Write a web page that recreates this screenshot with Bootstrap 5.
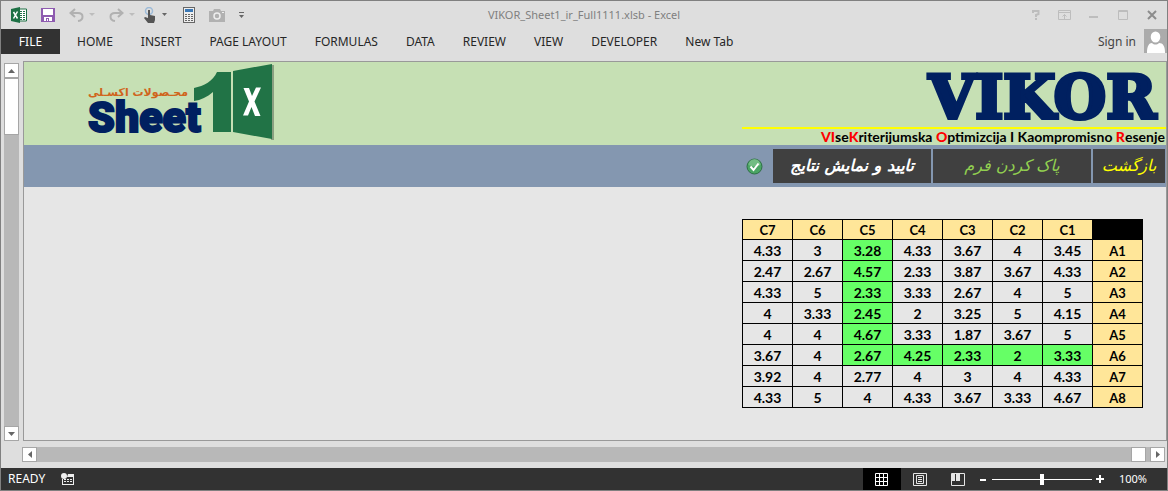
<!DOCTYPE html>
<html lang="en">
<head>
<meta charset="utf-8">
<meta name="viewport" content="width=device-width, initial-scale=1">
<title>VIKOR_Sheet1_ir_Full1111.xlsb - Excel</title>
<link href="https://cdn.jsdelivr.net/npm/bootstrap@5.3.0/dist/css/bootstrap.min.css" rel="stylesheet">
<style>
  body { font: 12px/16px "Noto Sans", "Open Sans", sans-serif; background: #dedede; color: #262626; }
  .app { border: 1px solid #808080; }
  .plain { border: 0; background: none; padding: 0; color: inherit; display: flex; align-items: center; justify-content: center; }
  svg { display: block; flex: none; }
  .titlebar { height: 28px; }
  .quick { padding-left: 10px; }
  .quick button { margin-left: 14px; }
  .quick .touch { margin-left: 8px; }
  .quick .calc { margin-left: 16px; }
  .doc-name { color: #808080; font-size: 11px; }
  .win { gap: 12px; padding-right: 7px; color: #bdbdbd; }
  .win button { width: 17px; height: 20px; }
  .ribbon { height: 25px; }
  .ribbon a { color: #262626; text-decoration: none; line-height: 25px; }
  .ribbon .file { background: #323232; color: #fff; width: 59px; text-align: center; }
  .tabs { padding-left: 17px; gap: 28px; }
  .signin { color: #444 !important; }
  .work { padding: 7px 0 0 3px; }
  .vscroll { width: 15px; margin: 2px 4px 0 0; background: #b8b8b8; }
  .knob { background: #fff; border: 1px solid #a6a6a6; }
  .vscroll .knob { width: 15px; height: 15px; }
  .vscroll .thumb { height: 57px; }
  .sheet { background: #e6e6e6; border: 1px solid #999; min-width: 0; }
  .banner { background: #c6e0b4; min-height: 83px; }
  .brand-mark { margin-left: 60px; }
  .method { width: 424px; }
  .method h1 { font: bold 60px/59px "DejaVu Serif", serif; color: #002060; -webkit-text-stroke: 4px #002060; border-bottom: 2px solid #ff0; padding: 6px 10px 0 0; }
  .method p { font: bold 14px/16px Lato, sans-serif; color: #000; padding-right: 1px; }
  .method b { color: #f00; }
  .actions { background: #8497b0; padding: 4px 1px 4px 0; gap: 2px; }
  .act { background: #404040; border: 0; height: 34px; padding: 0; font: italic bold 16px/30px "DejaVu Sans", sans-serif; width: 158px; color: #fff; }
  .act.clear-form { color: #92d050; font-weight: normal; }
  .act.back { color: #ff0; width: 72px; font-weight: normal; }
  .grid-area { padding: 32px 23px 20px 0; }
  .matrix { width: 401px; table-layout: fixed; border-collapse: collapse; color: #000; font: bold 14px/18px Lato, sans-serif; text-align: center; }
  .matrix th, .matrix td { border: 1px solid #000; padding: 2px 0 0; height: 21px; }
  .matrix th { background: #ffe699; font-size: 13px; }
  .matrix thead th, .matrix thead td { height: 20px; line-height: 17px; }
  .matrix .corner { background: #000; }
  .matrix .hit { background: #66ff66; }
  .hscroll { height: 15px; margin: 6px 2px 6px 21px; background: #b8b8b8; }
  .hscroll .knob { width: 15px; height: 15px; }
  .status { background: #323232; color: #fff; height: 22px; }
  .status .mode { margin: 0 16px 0 7px; }
  .status .percent { margin: 0 20px 0 15px; font-size: 11px; }
  .status .view { width: 38px; height: 22px; }
  .status .view.on { background: #000; }
  .zoom { appearance: none; width: 100px; height: 20px; margin: 0 4px 0 5px; background: linear-gradient(#fff, #fff) center / 100% 1px no-repeat; }
  .zoom::-webkit-slider-thumb { appearance: none; width: 4px; height: 11px; background: #fff; }
  .zoom::-moz-range-thumb { width: 4px; height: 11px; background: #fff; border: 0; border-radius: 0; }
</style>
</head>
<body>
<div class="app d-flex flex-column min-vh-100">
  <header>
    <div class="titlebar d-flex align-items-center position-relative">
      <div class="quick d-flex align-items-center">
        <svg width="16" height="16" viewBox="0 0 16 16" role="img" aria-label="Excel"><path d="M8 2h7.500v12H8z" fill="#fff" stroke="#1e7145"/><path d="M9 4h2v1H9zm3 0h2v1h-2zM9 6h2v1H9zm3 0h2v1h-2zM9 8h2v1H9zm3 0h2v1h-2zM9 10h2v1H9zm3 0h2v1h-2zM9 12h2v1H9zm3 0h2v1h-2z" fill="#1e7145"/><path d="M0 2l9-2v16l-9-2z" fill="#1e7145"/><path d="M2.500 5l4 6.500M6.500 4.500l-4 7" stroke="#fff" stroke-width="1.500"/></svg>
        <button class="plain" aria-label="Save"><svg width="14" height="14" viewBox="0 0 14 14"><path d="M0 0h14v14H0z" fill="#8e5bb0"/><path d="M2 1h10v6H2zM3 9h8v4H3z" fill="#fff"/><path d="M5 10h3v3H5z" fill="#8e5bb0"/><path d="M6 11h1v2H6z" fill="#fff"/></svg></button>
        <button class="plain" aria-label="Undo"><svg width="26" height="14" viewBox="0 0 26 14"><path d="M6 1L1.500 5 6 9M2 5h7c6 0 6 7 0 8" fill="none" stroke="#b1b1b1" stroke-width="2"/><path d="M20 5h6l-3 3z" fill="#bdbdbd"/></svg></button>
        <button class="plain" aria-label="Redo"><svg width="26" height="14" viewBox="0 0 26 14"><path d="M9 1l4.500 4L9 9M13 5H6C0 5 0 12 6 13" fill="none" stroke="#b1b1b1" stroke-width="2"/><path d="M20 5h6l-3 3z" fill="#bdbdbd"/></svg></button>
        <button class="plain touch" aria-label="Touch mode"><svg width="24" height="16" viewBox="0 0 24 16"><circle cx="6" cy="4" r="3.500" fill="none" stroke="#9dbbd8" stroke-width="1.500"/><path d="M5 3h2v5l5 1v4l-1 3H5L1 11l1-1 3 1z" fill="#555"/><path d="M19 6h5l-2.500 3z" fill="#666"/></svg></button>
        <button class="plain calc" aria-label="Calculator"><svg width="12" height="16" viewBox="0 0 12 16"><path d="M0 0h12v16H0z" fill="#666"/><path d="M1 1h10v14H1z" fill="#eee"/><path d="M2 2h8v3H2z" fill="#3b78b5"/><path d="M2 7h2v1H2zm3 0h2v1H5zm3 0h2v1H8zM2 9h2v1H2zm3 0h2v1H5zm3 0h2v1H8zM2 11h2v1H2zm3 0h2v1H5zm3 0h2v1H8zM2 13h2v1H2zm3 0h2v1H5zm3 0h2v1H8z" fill="#666"/></svg></button>
        <button class="plain" aria-label="Camera"><svg width="16" height="13" viewBox="0 0 16 13"><path d="M0 2h4l1-2h6l1 2h4v11H0z" fill="#b1b1b1"/><circle cx="8" cy="7" r="3" fill="none" stroke="#eee" stroke-width="1.500"/><path d="M13 3h2v1h-2z" fill="#eee"/></svg></button>
        <button class="plain" aria-label="Customize Quick Access Toolbar"><svg width="5" height="6" viewBox="0 0 5 6"><path d="M0 0h5v1H0zM0 3h5L2.500 6z" fill="#666"/></svg></button>
      </div>
      <div class="doc-name position-absolute start-50 translate-middle-x">VIKOR_Sheet1_ir_Full1111.xlsb - Excel</div>
      <div class="win d-flex ms-auto">
        <button class="plain" aria-label="Help"><svg width="8" height="10" viewBox="0 0 8 10"><path d="M1 3V1h5.500v3L4 5v2M3 9h2" fill="none" stroke="currentColor" stroke-width="2"/></svg></button>
        <button class="plain" aria-label="Ribbon options"><svg width="13" height="10" viewBox="0 0 13 10"><path d="M.5.5h12v9H.5zM.5 2.500h12M6.500 9V4.500M4.500 6.500l2-2 2 2" fill="none" stroke="currentColor"/></svg></button>
        <button class="plain" aria-label="Minimize"><svg width="9" height="10" viewBox="0 0 9 10"><path d="M0 6h9v2H0z" fill="currentColor"/></svg></button>
        <button class="plain" aria-label="Maximize"><svg width="10" height="10" viewBox="0 0 10 10"><path d="M.5.5h9v9H.5zM0 1.500h10" fill="none" stroke="currentColor"/></svg></button>
        <button class="plain" aria-label="Close"><svg width="10" height="10" viewBox="0 0 10 10"><path d="M1 1l8 8M9 1L1 9" stroke="#8c8c8c" stroke-width="2"/></svg></button>
      </div>
    </div>
    <nav class="ribbon d-flex" aria-label="Ribbon">
      <a class="file" href="#">FILE</a>
      <div class="tabs d-flex text-nowrap">
        <a href="#">HOME</a><a href="#">INSERT</a><a href="#">PAGE LAYOUT</a><a href="#">FORMULAS</a><a href="#">DATA</a><a href="#">REVIEW</a><a href="#">VIEW</a><a href="#">DEVELOPER</a><a href="#">New Tab</a>
      </div>
      <a class="signin d-flex ms-auto text-nowrap" href="#"><span class="me-2">Sign in</span><svg width="23" height="24" viewBox="0 0 23 24"><path d="M0 0h23v24H0z" fill="#ababab"/><ellipse cx="11.500" cy="8" rx="4.800" ry="5.500" fill="#fff"/><path d="M3 24c0-7 2-10 5-10 2 2 5 2 7 0 4 0 6 3 6 10z" fill="#fff"/></svg></a>
    </nav>
  </header>

  <div class="work d-flex flex-grow-1">
    <div class="vscroll d-flex flex-column">
      <button class="plain knob" aria-label="Scroll up"><svg width="7" height="4" viewBox="0 0 7 4"><path d="M0 4h7L3.500 0z" fill="#666"/></svg></button>
      <div class="knob thumb"></div>
      <button class="plain knob mt-auto" aria-label="Scroll down"><svg width="7" height="4" viewBox="0 0 7 4"><path d="M0 0h7L3.500 4z" fill="#666"/></svg></button>
    </div>
    <main class="sheet flex-grow-1">
      <div class="banner d-flex justify-content-between">
        <svg class="brand-mark" width="192" height="80" viewBox="84 62 192 80" role="img" aria-label="Sheet1 محصولات اکسلی">
          <path d="M194 88c10-2 19-7 23-16h14v60h-18V92c-6 5-12 8-19 9z" fill="#217346"/>
          <path d="M272 65h2v75h-3z" fill="#8aa081"/>
          <path d="M233 71l39-7v75l-39-7z" fill="#217346"/>
          <path d="M243.500 88h5.500l3 8 4-8.500h5l-6.500 14 6 14.500H255l-3.500-9-3.500 8.500h-5l6-14z" fill="#fff"/>
          <text x="188" y="96" direction="rtl" font-family="DejaVu Sans, sans-serif" font-weight="bold" font-size="11" fill="#d0641c">محـصولات اکسـلی</text>
          <text x="88" y="132" font-family="Roboto, sans-serif" font-weight="900" font-size="43" fill="#002060" stroke="#002060" stroke-width="2">Sheet</text>
        </svg>
        <div class="method text-end">
          <h1 class="m-0">VIKOR</h1>
          <p class="m-0 text-nowrap"><b>VI</b>se<b>K</b>riterijumska <b>O</b>ptimizcija I Kaompromisno <b>R</b>esenje</p>
        </div>
      </div>
      <div class="actions d-flex justify-content-end align-items-center">
        <svg class="me-2" width="17" height="17" viewBox="0 0 17 17" role="img" aria-label="OK"><circle cx="8.500" cy="8.500" r="7.500" fill="#4aa564" stroke="#2f6f46"/><path d="M2.500 7a6 6 0 0 1 12 0q-6 3-12 0z" fill="#8ccb98" opacity=".6"/><path d="M4.500 8.500l3 3.500 5-6.500" fill="none" stroke="#fff" stroke-width="2"/></svg>
        <button class="act" lang="fa" dir="rtl">تایید و نمایش نتایج</button>
        <button class="act clear-form" lang="fa" dir="rtl">پاک کردن فرم</button>
        <button class="act back" lang="fa" dir="rtl">بازگشت</button>
      </div>
      <div class="grid-area d-flex justify-content-end">
        <table class="matrix">
          <thead><tr><th>C7</th><th>C6</th><th>C5</th><th>C4</th><th>C3</th><th>C2</th><th>C1</th><td class="corner"></td></tr></thead>
          <tbody>
            <tr><td>4.33</td><td>3</td><td class="hit">3.28</td><td>4.33</td><td>3.67</td><td>4</td><td>3.45</td><th>A1</th></tr>
            <tr><td>2.47</td><td>2.67</td><td class="hit">4.57</td><td>2.33</td><td>3.87</td><td>3.67</td><td>4.33</td><th>A2</th></tr>
            <tr><td>4.33</td><td>5</td><td class="hit">2.33</td><td>3.33</td><td>2.67</td><td>4</td><td>5</td><th>A3</th></tr>
            <tr><td>4</td><td>3.33</td><td class="hit">2.45</td><td>2</td><td>3.25</td><td>5</td><td>4.15</td><th>A4</th></tr>
            <tr><td>4</td><td>4</td><td class="hit">4.67</td><td>3.33</td><td>1.87</td><td>3.67</td><td>5</td><th>A5</th></tr>
            <tr><td>3.67</td><td>4</td><td class="hit">2.67</td><td class="hit">4.25</td><td class="hit">2.33</td><td class="hit">2</td><td class="hit">3.33</td><th>A6</th></tr>
            <tr><td>3.92</td><td>4</td><td>2.77</td><td>4</td><td>3</td><td>4</td><td>4.33</td><th>A7</th></tr>
            <tr><td>4.33</td><td>5</td><td>4</td><td>4.33</td><td>3.67</td><td>3.33</td><td>4.67</td><th>A8</th></tr>
          </tbody>
        </table>
      </div>
    </main>
  </div>
  <div class="hscroll d-flex">
    <button class="plain knob" aria-label="Scroll left"><svg width="4" height="7" viewBox="0 0 4 7"><path d="M4 0v7L0 3.500z" fill="#666"/></svg></button>
    <div class="knob ms-auto me-1"></div>
    <button class="plain knob" aria-label="Scroll right"><svg width="4" height="7" viewBox="0 0 4 7"><path d="M0 0v7l4-3.500z" fill="#666"/></svg></button>
  </div>

  <footer class="status d-flex align-items-center">
    <span class="mode">READY</span>
    <button class="plain" aria-label="Record macro"><svg width="13" height="12" viewBox="0 0 13 12"><path d="M7 1h6v11H1V6h1v5h10V4H6z" fill="#eee"/><circle cx="3" cy="3" r="3" fill="#eee"/><path d="M3 6h2v1H3zm3 0h2v1H6zm3 0h2v1H9zM3 8h2v1H3zm3 0h2v1H6zm3 0h2v1H9z" fill="#eee"/></svg></button>
    <button class="plain view on ms-auto" aria-label="Normal"><svg width="13" height="13" viewBox="0 0 13 13"><path d="M.5.5h12v12H.5zM4.500 0v13M8.500 0v13M0 4.500h13M0 8.500h13" fill="none" stroke="#fff"/></svg></button>
    <button class="plain view" aria-label="Page layout"><svg width="14" height="13" viewBox="0 0 14 13"><path d="M.5.5h13v12H.5zM3.500 2.500h7v8h-7zM5 4.500h4M5 6.500h4M5 8.500h4" fill="none" stroke="#e6e6e6"/></svg></button>
    <button class="plain view" aria-label="Page break preview"><svg width="14" height="13" viewBox="0 0 14 13"><path d="M.5.500h13v12H.5z" fill="none" stroke="#e6e6e6"/><path d="M1 1h3v7H1zM5 1h4v7H5z" fill="#e6e6e6"/></svg></button>
    <button class="plain" aria-label="Zoom out"><svg width="10" height="9" viewBox="0 0 10 9"><path d="M3 4h6v2H3z" fill="#fff"/></svg></button>
    <input class="zoom" type="range" min="0" max="200" value="100" aria-label="Zoom">
    <button class="plain" aria-label="Zoom in"><svg width="8" height="8" viewBox="0 0 8 8"><path d="M3 0h2v8H3zM0 3h8v2H0z" fill="#fff"/></svg></button>
    <span class="percent">100%</span>
  </footer>
</div>
<script src="https://cdn.jsdelivr.net/npm/bootstrap@5.3.0/dist/js/bootstrap.bundle.min.js"></script>
</body>
</html>
